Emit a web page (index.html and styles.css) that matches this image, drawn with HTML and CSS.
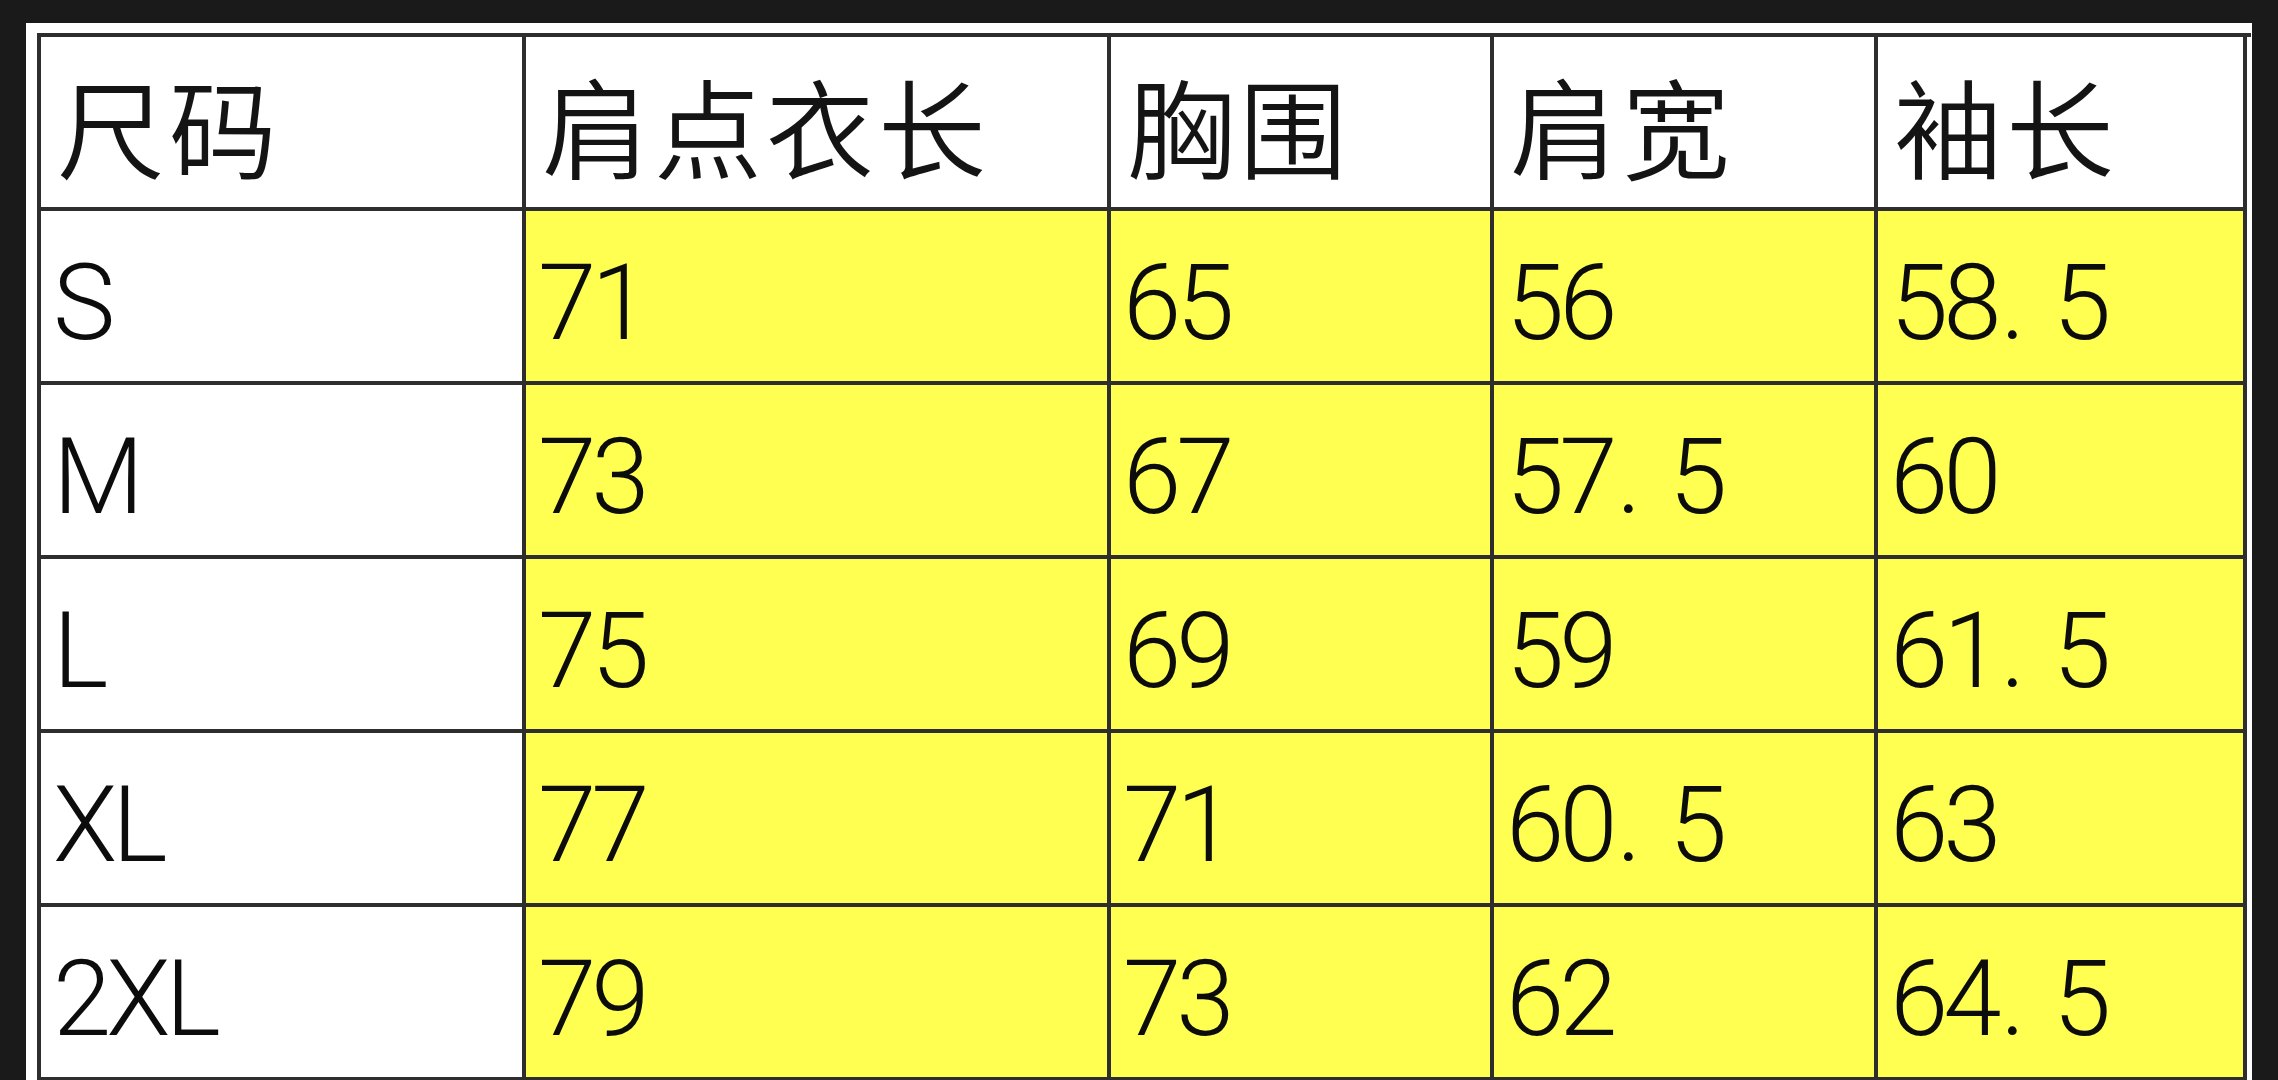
FILE: index.html
```html
<!DOCTYPE html>
<html lang="zh-CN">
<head>
<meta charset="utf-8">
<title>尺码表</title>
<link rel="stylesheet" href="styles.css">
</head>
<body>
<div class="panel">
  <div class="size-table">
    <div class="cell hd">尺码</div>
    <div class="cell hd">肩点衣长</div>
    <div class="cell hd">胸围</div>
    <div class="cell hd">肩宽</div>
    <div class="cell hd">袖长</div>

    <div class="cell lbl">S</div>
    <div class="cell val">71</div>
    <div class="cell val">65</div>
    <div class="cell val">56</div>
    <div class="cell val">58<span class="dot">.</span>5</div>

    <div class="cell lbl">M</div>
    <div class="cell val">73</div>
    <div class="cell val">67</div>
    <div class="cell val">57<span class="dot">.</span>5</div>
    <div class="cell val">60</div>

    <div class="cell lbl">L</div>
    <div class="cell val">75</div>
    <div class="cell val">69</div>
    <div class="cell val">59</div>
    <div class="cell val">61<span class="dot">.</span>5</div>

    <div class="cell lbl">XL</div>
    <div class="cell val">77</div>
    <div class="cell val">71</div>
    <div class="cell val">60<span class="dot">.</span>5</div>
    <div class="cell val">63</div>

    <div class="cell lbl">2XL</div>
    <div class="cell val">79</div>
    <div class="cell val">73</div>
    <div class="cell val">62</div>
    <div class="cell val">64<span class="dot">.</span>5</div>
  </div>
</div>
</body>
</html>
```

FILE: styles.css
```css
html, body {
  margin: 0;
  padding: 0;
  background: #1a1a1a;
  height: 1080px;
  overflow: hidden;
}

.panel {
  margin: 23px 0 0 26px;
  width: 2226px;
  height: 1100px;
  background: #ffffff;
  padding: 10px 0 0 11px;
  box-sizing: border-box;
}

.size-table {
  display: grid;
  grid-template-columns: 485px 585px 383px 384px 369px;
  grid-auto-rows: 174px;
  width: 2210px;
  border-top: 4px solid #2e2e2e;
  border-left: 4px solid #2e2e2e;
  box-sizing: content-box;
  color: #141414;
}

.cell {
  box-sizing: border-box;
  border-right: 4px solid #2e2e2e;
  border-bottom: 4px solid #2e2e2e;
  line-height: 1;
  white-space: nowrap;
}

.hd {
  background: #ffffff;
  font-family: "Noto Sans CJK SC", "Noto Sans CJK JP", sans-serif;
  font-weight: 350;
  font-size: 108px;
  letter-spacing: 4px;
  padding-top: 33px;
  padding-left: 16px;
}

.lbl,
.val {
  font-family: Roboto, "Liberation Sans", sans-serif;
  font-weight: 300;
  font-size: 105px;
  letter-spacing: -5px;
  padding-top: 40px;
  padding-left: 12px;
  color: #0c0c0c;
}

.lbl {
  background: #ffffff;
}

.val {
  background: #ffff52;
}

.dot {
  display: inline-block;
  width: 0.5em;
  padding-left: 4px;
}
```
